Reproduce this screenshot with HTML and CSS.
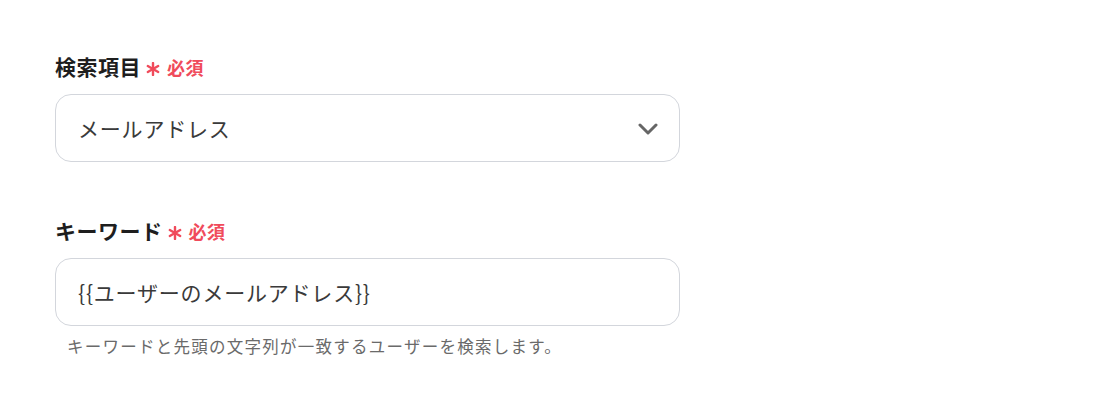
FILE: index.html
```html
<!DOCTYPE html>
<html lang="ja">
<head>
<meta charset="utf-8">
<link rel="stylesheet" href="styles.css">
</head>
<body>
<div class="form">
  <div class="field">
    <div class="label">
      <span class="label-text">検索項目</span>
      <svg class="asterisk" width="14" height="14" viewBox="0 0 14 14"><g stroke="#f04b5b" stroke-width="2.4" stroke-linecap="round"><line x1="7" y1="1" x2="7" y2="13"/><line x1="1.8" y1="4" x2="12.2" y2="10"/><line x1="1.8" y1="10" x2="12.2" y2="4"/></g></svg>
      <span class="req">必須</span>
    </div>
    <div class="box select">
      <span class="value">メールアドレス</span>
      <svg class="chevron" width="20" height="12" viewBox="0 0 20 12"><polyline points="2,2 10,10 18,2" fill="none" stroke="#666" stroke-width="3" stroke-linecap="round" stroke-linejoin="round"/></svg>
    </div>
  </div>
  <div class="field second">
    <div class="label">
      <span class="label-text">キーワード</span>
      <svg class="asterisk" width="14" height="14" viewBox="0 0 14 14"><g stroke="#f04b5b" stroke-width="2.4" stroke-linecap="round"><line x1="7" y1="1" x2="7" y2="13"/><line x1="1.8" y1="4" x2="12.2" y2="10"/><line x1="1.8" y1="10" x2="12.2" y2="4"/></g></svg>
      <span class="req">必須</span>
    </div>
    <div class="box">
      <span class="value">{{ユーザーのメールアドレス}}</span>
    </div>
    <div class="help">キーワードと先頭の文字列が一致するユーザーを検索します。</div>
  </div>
</div>
</body>
</html>
```
FILE: styles.css
```css
html, body {
  margin: 0;
  padding: 0;
  background: #ffffff;
}
body {
  font-family: "Noto Sans CJK JP", "Noto Sans", sans-serif;
}
.form {
  padding: 53px 0 0 55px;
  width: 625px;
}
.field.second {
  margin-top: 55px;
}
.label {
  display: flex;
  align-items: center;
  height: 26px;
}
.label-text {
  font-size: 21px;
  font-weight: 700;
  letter-spacing: 0.5px;
  color: #1e1e1e;
  line-height: 26px;
}
.asterisk {
  margin-left: 5px;
  margin-top: 6px;
}
.req {
  margin-left: 7px;
  font-size: 18px;
  font-weight: 700;
  letter-spacing: 0.5px;
  color: #f04b5b;
  line-height: 26px;
  margin-top: 2px;
}
.box {
  margin-top: 15px;
  height: 68px;
  box-sizing: border-box;
  border: 1px solid #d3d6dc;
  border-radius: 16px;
  display: flex;
  align-items: center;
  padding: 0 21px 0 22px;
}
.select {
  justify-content: space-between;
}
.value {
  font-size: 21px;
  letter-spacing: 0.8px;
  color: #3a3a3a;
}
.chevron {
  margin-top: 2px;
}
.help {
  margin-top: 10px;
  padding-left: 12px;
  font-size: 16.5px;
  letter-spacing: 1.25px;
  line-height: 20px;
  color: #6a6a6a;
}
```
